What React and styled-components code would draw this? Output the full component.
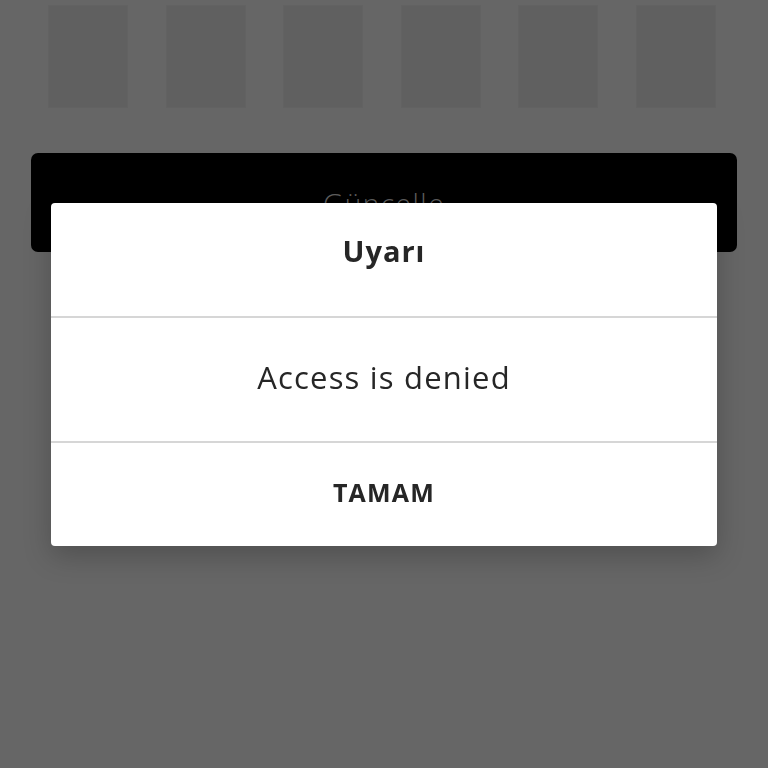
import React from 'react';
import styled, { createGlobalStyle } from 'styled-components';

const GlobalStyle = createGlobalStyle`
  html, body {
    margin: 0;
    padding: 0;
    background: #666666;
    font-family: 'Open Sans', 'Liberation Sans', sans-serif;
  }
`;

const Page = styled.div`
  min-height: 768px;
  background: #666666;
  padding-top: 5px;
  box-sizing: border-box;
`;

const ThumbRow = styled.div`
  display: flex;
  justify-content: space-between;
  padding: 0 52px 0 48px;
`;

const Thumb = styled.div`
  width: 80px;
  height: 103px;
  background: #606060;
  border: 1px solid #626262;
  box-sizing: border-box;
`;

const UpdateButton = styled.button`
  display: flex;
  align-items: center;
  justify-content: center;
  width: calc(100% - 62px);
  height: 99px;
  margin: 45px 31px 0;
  border: none;
  border-radius: 7px;
  background: #000;
  color: #5e5e5e;
  font-family: 'Open Sans', 'Liberation Sans', sans-serif;
  font-size: 28px;
  font-weight: 300;
  letter-spacing: 1.5px;
`;

const Dialog = styled.div`
  position: fixed;
  top: 203px;
  left: 51px;
  width: 666px;
  background: #fff;
  border-radius: 4px;
  box-shadow: 0 10px 28px rgba(0, 0, 0, 0.22);
  display: flex;
  flex-direction: column;
`;

const Section = styled.div`
  display: flex;
  align-items: center;
  justify-content: center;
  height: ${(p) => p.$height}px;
  padding-bottom: ${(p) => p.$lift || 0}px;
  box-sizing: border-box;
  border-bottom: ${(p) => (p.$divider ? '2px solid #d6d6d6' : 'none')};
  color: #262626;
`;

const Title = styled.span`
  font-size: 29px;
  font-weight: 700;
  letter-spacing: 1px;
`;

const Message = styled.span`
  font-size: 31px;
  font-weight: 400;
  letter-spacing: 1.2px;
`;

const Action = styled.span`
  font-size: 25px;
  font-weight: 700;
  letter-spacing: 1.2px;
`;

export default function App() {
  return (
    <>
      <GlobalStyle />
      <Page>
        <ThumbRow>
          {[0, 1, 2, 3, 4, 5].map((i) => (
            <Thumb key={i} />
          ))}
        </ThumbRow>
        <UpdateButton>Güncelle</UpdateButton>
        <Dialog>
          <Section $height={115} $lift={18} $divider>
            <Title>Uyarı</Title>
          </Section>
          <Section $height={125} $lift={6} $divider>
            <Message>Access is denied</Message>
          </Section>
          <Section $height={103} $lift={6}>
            <Action>TAMAM</Action>
          </Section>
        </Dialog>
      </Page>
    </>
  );
}
